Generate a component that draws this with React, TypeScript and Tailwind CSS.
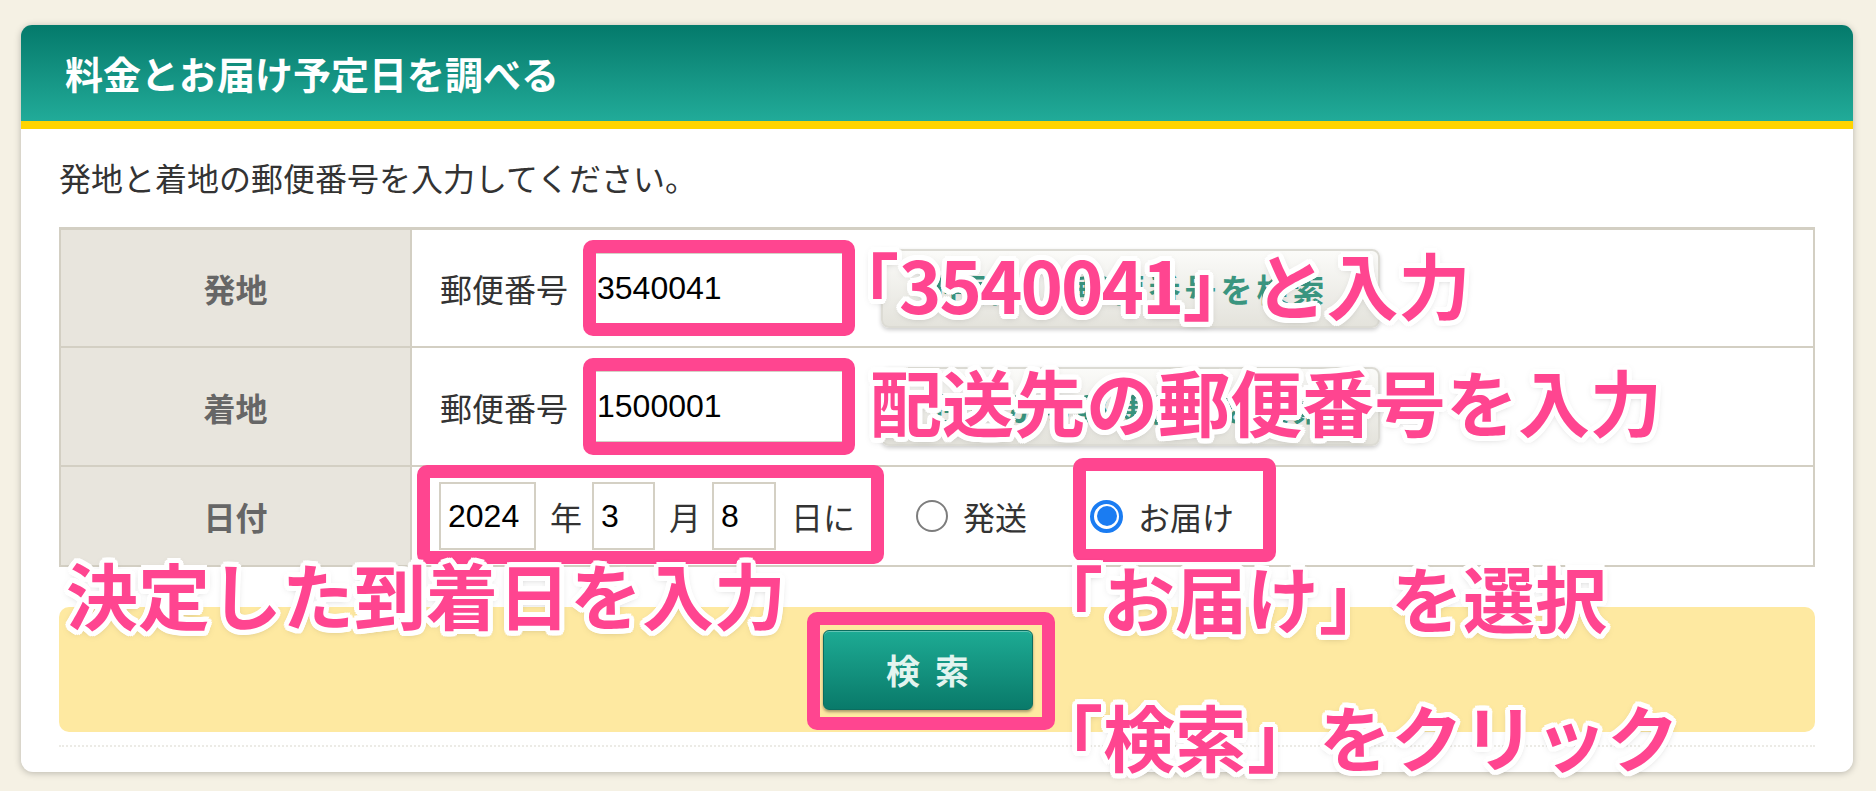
import React from 'react'

const annot =
  "absolute whitespace-nowrap text-[72px] leading-none font-bold text-[#ff4590] [text-shadow:5px_0_0_#fff,-5px_0_0_#fff,0_5px_0_#fff,0_-5px_0_#fff,3.5px_3.5px_0_#fff,-3.5px_3.5px_0_#fff,3.5px_-3.5px_0_#fff,-3.5px_-3.5px_0_#fff,4.6px_1.9px_0_#fff,-4.6px_1.9px_0_#fff,4.6px_-1.9px_0_#fff,-4.6px_-1.9px_0_#fff,1.9px_4.6px_0_#fff,-1.9px_4.6px_0_#fff,1.9px_-4.6px_0_#fff,-1.9px_-4.6px_0_#fff,0_2px_9px_rgba(0,0,0,0.35)]"

const pinkBox = 'absolute border-[13px] border-[#ff4590] rounded-[10px] pointer-events-none'

function ZipInput({ value }: { value: string }) {
  return (
    <input
      readOnly
      defaultValue={value}
      className="ml-[20px] w-[256px] h-[73px] bg-white border-2 border-[#d4d0c4] pl-[7px] text-[32px] text-black font-['Liberation_Sans',Arial,sans-serif] outline-none"
    />
  )
}

function ZipSearchButton() {
  return (
    <div className="ml-[37px] w-[499px] h-[79px] rounded-[8px] border-2 border-[#dcdbd4] bg-linear-to-b from-[#fbfbf9] to-[#e4e3dc] shadow-[0_2px_4px_rgba(0,0,0,0.2)] flex items-center justify-center text-[32px] font-bold tracking-[4px] text-[#3a957f]">
      住所から郵便番号を検索
    </div>
  )
}

function DateBox({ value, width }: { value: string; width: string }) {
  return (
    <input
      readOnly
      defaultValue={value}
      className={`${width} h-[68px] bg-white border-2 border-[#d4d0c4] pl-[7px] text-[32px] text-black font-['Liberation_Sans',Arial,sans-serif] outline-none`}
    />
  )
}

export default function App() {
  return (
    <div className="relative min-h-screen w-full bg-[#f5f1e4] pt-[25px] pl-[21px] pr-[23px] pb-[19px] font-['Noto_Sans_CJK_JP','Noto_Sans',sans-serif] text-[#333]">
      {/* card */}
      <div className="w-[1832px] h-[747px] bg-white rounded-[12px] shadow-[0_1px_7px_rgba(0,0,0,0.25)] flex flex-col">
        <div className="h-[104px] rounded-t-[11px] border-b-[8px] border-[#ffd400] bg-linear-to-b from-[#047a6b] to-[#21ab99] flex items-center pl-[44px]">
          <h1 className="text-[38px] font-bold text-white leading-none">料金とお届け予定日を調べる</h1>
        </div>

        <div className="px-[38px] flex flex-col">
          <p className="mt-[28px] text-[32px] leading-[40px] text-[#333]">
            発地と着地の郵便番号を入力してください。
          </p>

          {/* form table */}
          <div className="mt-[30px] w-[1756px] border-x-2 border-b-2 border-[#d3cfc3] flex flex-col">
            <div className="h-[119px] border-t-[3px] border-[#d3cfc3] flex">
              <div className="w-[351px] border-r-2 border-[#d3cfc3] bg-[#e8e5dd] flex items-center justify-center text-[32px] font-bold text-[#666]">
                発地
              </div>
              <div className="flex-1 flex items-center pl-[28px]">
                <span className="text-[32px]">郵便番号</span>
                <ZipInput value="3540041" />
                <ZipSearchButton />
              </div>
            </div>

            <div className="h-[119px] border-t-2 border-[#d3cfc3] flex">
              <div className="w-[351px] border-r-2 border-[#d3cfc3] bg-[#e8e5dd] flex items-center justify-center text-[32px] font-bold text-[#666]">
                着地
              </div>
              <div className="flex-1 flex items-center pl-[28px]">
                <span className="text-[32px]">郵便番号</span>
                <ZipInput value="1500001" />
                <ZipSearchButton />
              </div>
            </div>

            <div className="h-[100px] border-t-2 border-[#d3cfc3] flex">
              <div className="w-[351px] border-r-2 border-[#d3cfc3] bg-[#e8e5dd] flex items-center justify-center text-[32px] font-bold text-[#666]">
                日付
              </div>
              <div className="flex-1 flex items-center pl-[27px] text-[32px]">
                <DateBox value="2024" width="w-[97px]" />
                <span className="ml-[14px] mr-[10px]">年</span>
                <DateBox value="3" width="w-[63px]" />
                <span className="ml-[14px] mr-[11px]">月</span>
                <DateBox value="8" width="w-[64px]" />
                <span className="ml-[15px]">日に</span>

                <span className="ml-[61px] w-[32px] h-[32px] rounded-full border-2 border-[#7d7d7d] bg-white" />
                <span className="ml-[15px]">発送</span>

                <span className="ml-[63px] w-[33px] h-[33px] rounded-full border-[4px] border-[#1a7cf2] bg-white flex items-center justify-center">
                  <span className="w-[20px] h-[20px] rounded-full bg-[#1a7cf2]" />
                </span>
                <span className="ml-[15px]">お届け</span>
              </div>
            </div>
          </div>

          {/* submit area */}
          <div className="mt-[40px] h-[125px] rounded-[10px] bg-[#fee9a1] flex items-center justify-center pr-[19px]">
            <button className="w-[210px] h-[80px] rounded-[6px] border border-[#0c6d5f] bg-linear-to-b from-[#1dab94] to-[#097a6a] shadow-[0_2px_3px_rgba(0,0,0,0.35),inset_0_1px_0_rgba(255,255,255,0.3)] flex items-center justify-center pl-[15px] text-[34px] font-bold tracking-[15px] text-[#e2f4ef]">
              検索
            </button>
          </div>

          <div className="mt-[13px] border-t-2 border-dotted border-[#ecebe6]" />
        </div>
      </div>

      {/* annotations */}
      <div className={`${pinkBox} left-[583px] top-[240px] w-[272px] h-[96px]`} />
      <div className={`${pinkBox} left-[583px] top-[358px] w-[272px] h-[97px]`} />
      <div className={`${pinkBox} left-[417px] top-[465px] w-[467px] h-[99px]`} />
      <div className={`${pinkBox} left-[1073px] top-[458px] w-[203px] h-[104px]`} />
      <div className={`${pinkBox} left-[807px] top-[612px] w-[248px] h-[118px]`} />

      <div className={`${annot} left-[827px] top-[247px]`}>
        「<span className="tracking-[-2px]">3540041</span>」と入力
      </div>
      <div className={`${annot} left-[870px] top-[364px]`}>配送先の郵便番号を入力</div>
      <div className={`${annot} left-[66px] top-[557px]`}>決定した到着日を入力</div>
      <div className={`${annot} left-[1031px] top-[560px]`}>「お届け」を選択</div>
      <div className={`${annot} left-[1031px] top-[699px]`}>「検索」をクリック</div>
    </div>
  )
}
